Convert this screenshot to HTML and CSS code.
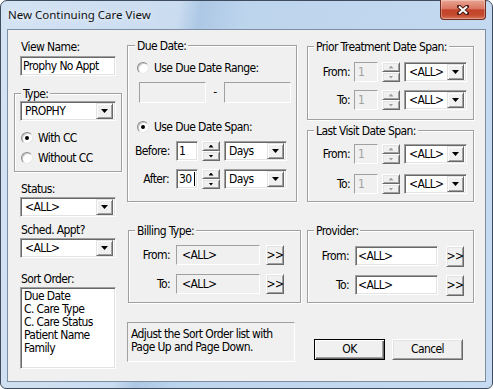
FILE: index.html
```html
<!DOCTYPE html>
<html lang="en">
<head>
  <meta charset="UTF-8" />
  <title>New Continuing Care View</title>
  <link rel="stylesheet" href="styles.css">
</head>
<body>
  <div class="window">
    <header class="titlebar">
      <span class="title">New Continuing Care View</span>
      <div class="close">
        <svg width="12" height="10" viewBox="0 0 12 10">
          <path d="M2 1.5 L10 8.5 M10 1.5 L2 8.5" stroke="#4a1d16" stroke-width="4" stroke-linecap="square"/>
          <path d="M2 1.5 L10 8.5 M10 1.5 L2 8.5" stroke="#fff" stroke-width="2"/>
        </svg>
      </div>
    </header>

    <main class="client">
      <!-- coluna esquerda -->
      <section class="col col-left">
        <div class="lbl lbl-view">View Name:</div>
        <div class="edit w96 mt2">Prophy No Appt</div>

        <fieldset class="group group-type">
          <legend>Type:</legend>
          <div class="combo w96"><span class="val">PROPHY</span><span class="drop"></span></div>
          <div class="radio on first"><span class="dot"></span>With CC</div>
          <div class="radio"><span class="dot"></span>Without CC</div>
        </fieldset>

        <div class="lbl lbl-status">Status:</div>
        <div class="combo w96 mt1"><span class="val">&lt;ALL&gt;</span><span class="drop"></span></div>

        <div class="lbl lbl-sched">Sched. Appt?</div>
        <div class="combo w96 mt1"><span class="val">&lt;ALL&gt;</span><span class="drop"></span></div>

        <div class="lbl lbl-sort">Sort Order:</div>
        <div class="list w96 mt1">
          <div>Due Date</div>
          <div>C. Care Type</div>
          <div>C. Care Status</div>
          <div>Patient Name</div>
          <div>Family</div>
        </div>
      </section>

      <!-- coluna do meio -->
      <section class="col col-mid">
        <fieldset class="group group-due">
          <legend>Due Date:</legend>
          <div class="radio"><span class="dot"></span>Use Due Date Range:</div>
          <div class="range">
            <div class="flat box67"></div>
            <span class="dash">-</span>
            <div class="flat box67"></div>
          </div>
          <div class="radio on span-radio"><span class="dot"></span>Use Due Date Span:</div>
          <div class="row row-before">
            <span class="cap cap-due">Before:</span>
            <div class="edit num22">1</div>
            <div class="spin"><span class="up"></span><span class="down"></span></div>
            <div class="combo days"><span class="val">Days</span><span class="drop"></span></div>
          </div>
          <div class="row row-after">
            <span class="cap cap-due">After:</span>
            <div class="edit num22">30<span class="caret"></span></div>
            <div class="spin"><span class="up"></span><span class="down"></span></div>
            <div class="combo days"><span class="val">Days</span><span class="drop"></span></div>
          </div>
        </fieldset>

        <fieldset class="group group-billing">
          <legend>Billing Type:</legend>
          <div class="row">
            <span class="cap cap-billing">From:</span>
            <div class="flat field84">&lt;ALL&gt;</div>
            <div class="btn more">&gt;&gt;</div>
          </div>
          <div class="row row-second">
            <span class="cap cap-billing">To:</span>
            <div class="flat field84">&lt;ALL&gt;</div>
            <div class="btn more">&gt;&gt;</div>
          </div>
        </fieldset>

        <div class="note">Adjust the Sort Order list with<br>Page Up and Page Down.</div>
      </section>

      <!-- coluna direita -->
      <section class="col col-right">
        <fieldset class="group group-prior">
          <legend>Prior Treatment Date Span:</legend>
          <div class="row">
            <span class="cap cap-right">From:</span>
            <div class="flat num24 off">1</div>
            <div class="spin off"><span class="up"></span><span class="down"></span></div>
            <div class="combo days"><span class="val">&lt;ALL&gt;</span><span class="drop"></span></div>
          </div>
          <div class="row row-to-prior">
            <span class="cap cap-right">To:</span>
            <div class="flat num24 off">1</div>
            <div class="spin off"><span class="up"></span><span class="down"></span></div>
            <div class="combo days"><span class="val">&lt;ALL&gt;</span><span class="drop"></span></div>
          </div>
        </fieldset>

        <fieldset class="group group-last">
          <legend>Last Visit Date Span:</legend>
          <div class="row">
            <span class="cap cap-right">From:</span>
            <div class="flat num24 off">1</div>
            <div class="spin off"><span class="up"></span><span class="down"></span></div>
            <div class="combo days"><span class="val">&lt;ALL&gt;</span><span class="drop"></span></div>
          </div>
          <div class="row row-to-last">
            <span class="cap cap-right">To:</span>
            <div class="flat num24 off">1</div>
            <div class="spin off"><span class="up"></span><span class="down"></span></div>
            <div class="combo days"><span class="val">&lt;ALL&gt;</span><span class="drop"></span></div>
          </div>
        </fieldset>

        <fieldset class="group group-provider">
          <legend>Provider:</legend>
          <div class="row">
            <span class="cap cap-provider">From:</span>
            <div class="edit field83">&lt;ALL&gt;</div>
            <div class="btn more more-prov">&gt;&gt;</div>
          </div>
          <div class="row row-second-prov">
            <span class="cap cap-provider">To:</span>
            <div class="edit field83">&lt;ALL&gt;</div>
            <div class="btn more more-prov">&gt;&gt;</div>
          </div>
        </fieldset>

        <div class="actions">
          <div class="btn push default">OK</div>
          <div class="btn push">Cancel</div>
        </div>
      </section>
    </main>
  </div>
</body>
</html>
```

FILE: styles.css
```css
* { margin: 0; padding: 0; box-sizing: border-box; }
body {
  font-family: "DejaVu Sans Condensed", "Liberation Sans", sans-serif;
  font-size: 12px;
  line-height: 13px;
  letter-spacing: -0.6px;
  color: #000;
  background: #fff;
}

/* moldura aero */
.window {
  width: 493px;
  height: 389px;
  display: flex;
  flex-direction: column;
  padding: 0 6px 6px;
  border: 1px solid #3e4c5e;
  border-radius: 7px 7px 6px 6px;
  background: linear-gradient(100deg, #d4e3f4 0%, #cadcf0 32%, #adc8e5 36%, #bdd4ed 44%, #c6dbf1 100%);
}
.titlebar {
  height: 28px;
  flex: none;
  display: flex;
  justify-content: space-between;
  align-items: flex-start;
}
.title {
  margin: 7px 0 0 1px;
  font-family: "Noto Sans", "Liberation Sans", sans-serif;
  font-size: 11.5px;
  line-height: 14px;
  letter-spacing: 0;
  color: #111;
  text-shadow: 0 0 6px #fff;
}
.close {
  width: 46px;
  height: 20px;
  margin-top: -1px;
  display: flex;
  align-items: center;
  justify-content: center;
  border: 1px solid #6e2b20;
  border-top: none;
  border-radius: 0 0 4px 4px;
  background: linear-gradient(#e9a593, #d97762 45%, #c4432a 52%, #c44a2f 80%, #d7785d);
  box-shadow: inset 0 0 0 1px rgba(255,255,255,0.3);
}

.client {
  flex: 1;
  display: flex;
  align-items: flex-start;
  padding-left: 6px;
  border: 1px solid #7b8ea4;
  background: #f0f0f0;
}
.col { display: flex; flex-direction: column; align-items: flex-start; }
.col-left { width: 108px; }
.col-mid { width: 174px; margin-left: 5px; }
.col-right { width: 167px; margin-left: 6px; }

.lbl { margin-left: 7px; height: 13px; white-space: nowrap; }
.lbl-view { margin-top: 11px; }
.lbl-status { margin-top: 11px; }
.lbl-sched { margin-top: 7px; }
.lbl-sort { margin-top: 15px; }
.col-left .edit, .col-left .combo, .col-left .list { margin-left: 6px; }
.col-left .group .combo { margin-left: 0; }
.mt1 { margin-top: 1px; }
.mt2 { margin-top: 2px; }
.w96 { width: 96px; }

/* controles classicos */
.edit, .combo, .list {
  height: 20px;
  display: flex;
  align-items: center;
  padding-left: 2px;
  background: #fff;
  border: 1px solid;
  border-color: #a0a0a0 #fff #fff #a0a0a0;
  box-shadow: inset 1px 1px 0 #696969, inset -1px -1px 0 #e3e3e3;
  white-space: nowrap;
}
.flat {
  height: 20px;
  display: flex;
  align-items: center;
  background: #f0f0f0;
  border: 1px solid;
  border-color: #a0a0a0 #fff #fff #a0a0a0;
  white-space: nowrap;
}
.flat.off { color: #a0a0a0; padding-left: 3px; }
.combo { padding: 2px; justify-content: space-between; }
.combo .val { padding-left: 2px; }
.combo .drop {
  width: 17px;
  height: 16px;
  display: flex;
  align-items: center;
  justify-content: center;
  background: #f0f0f0;
  border: 1px solid;
  border-color: #e3e3e3 #696969 #696969 #e3e3e3;
  box-shadow: inset 1px 1px 0 #fff, inset -1px -1px 0 #a0a0a0;
}
.combo .drop::after {
  content: "";
  width: 7px;
  height: 4px;
  background: #000;
  clip-path: polygon(0 0, 100% 0, 50% 100%);
}
.list {
  height: 82px;
  flex-direction: column;
  align-items: flex-start;
  padding: 2px 0 0 3px;
}
.caret {
  display: inline-block;
  width: 1px;
  height: 14px;
  margin-left: 2px;
  background: #000;
}

.btn {
  display: flex;
  align-items: center;
  justify-content: center;
  background: #f0f0f0;
  border: 1px solid;
  border-color: #fff #696969 #696969 #fff;
  box-shadow: inset 1px 1px 0 #e3e3e3, inset -1px -1px 0 #a0a0a0;
}
.more { width: 18px; height: 20px; margin-left: 6px; }
.more-prov { height: 21px; margin-left: 8px; }

.spin {
  width: 18px;
  height: 20px;
  margin-left: 4px;
  display: flex;
  flex-direction: column;
}
.spin span {
  flex: 1;
  display: flex;
  align-items: center;
  justify-content: center;
  background: #f0f0f0;
  border: 1px solid;
  border-color: #fff #696969 #696969 #fff;
  box-shadow: inset 1px 1px 0 #e3e3e3, inset -1px -1px 0 #a0a0a0;
}
.spin span::after {
  content: "";
  width: 5px;
  height: 3px;
  background: #000;
}
.spin .up::after { clip-path: polygon(50% 0, 100% 100%, 0 100%); }
.spin .down::after { clip-path: polygon(0 0, 100% 0, 50% 100%); }
.spin.off span::after { background: #a0a0a0; }

.radio {
  height: 20px;
  display: flex;
  align-items: center;
  white-space: nowrap;
}
.radio .dot {
  width: 12px;
  height: 12px;
  margin: 0 5px 0 1px;
  display: flex;
  align-items: center;
  justify-content: center;
  border-radius: 50%;
  background: #fff;
  border: 1px solid;
  border-color: #8c8c8c #e8e8e8 #e8e8e8 #8c8c8c;
  box-shadow: inset 1px 1px 0 #c8c8c8;
}
.radio.on .dot::after {
  content: "";
  width: 4px;
  height: 4px;
  border-radius: 50%;
  background: #000;
}

/* group boxes */
.group {
  border: 1px solid #a0a0a0;
  box-shadow: 1px 1px 0 #fff, inset 1px 1px 0 #fff;
}
.group legend {
  margin-left: 6px;
  padding: 3px 2px 0;
  line-height: 13px;
  white-space: nowrap;
  background: #f0f0f0;
}
.group-type { width: 108px; margin-top: 9px; padding: 0 0 3px 5px; }
.group-type legend { margin-left: 1px; }
.group-type .first { margin-top: 7px; }

.group-due { width: 170px; margin-top: 7px; padding: 5px 0 12px 7px; }
.group-due legend { margin-left: 0; }
.group-due .radio .dot { margin-left: 2px; }
.range { display: flex; align-items: center; margin: 4px 0 0 4px; }
.box67 { width: 67px; height: 21px; }
.dash { width: 18px; text-align: center; }
.span-radio { margin-top: 14px; }
.row { display: flex; align-items: center; height: 20px; }
.row-before { margin-top: 4px; }
.row-after { margin-top: 8px; }
.cap { text-align: right; flex: none; }
.cap-due { width: 41px; padding-right: 7px; }
.num22 { width: 22px; }
.days { width: 63px; margin-left: 4px; }

.group-billing { width: 173px; margin: 20px 0 0 1px; padding: 7px 0 8px; }
.cap-billing { width: 47px; padding-right: 6px; }
.field84 { width: 84px; padding-left: 5px; }
.row-second { margin-top: 9px; }

.note {
  width: 168px;
  height: 40px;
  margin-top: 19px;
  padding: 5px 0 0 3px;
  white-space: nowrap;
  border: 1px solid;
  border-color: #a0a0a0 #fff #fff #a0a0a0;
}

.group-prior { width: 167px; margin-top: 8px; padding: 8px 0 9px; }
.group-last { width: 167px; margin-top: 2px; padding: 6px 0 7px; }
.cap-right { width: 46px; padding-right: 4px; }
.num24 { width: 24px; }
.row-to-prior { margin-top: 8px; }
.row-to-last { margin-top: 10px; }

.group-provider { width: 167px; margin-top: 20px; padding: 8px 0 7px; }
.cap-provider { width: 47px; padding-right: 6px; }
.field83 { width: 83px; }
.row-second-prov { margin-top: 9px; }

.actions { display: flex; margin: 36px 0 0 7px; }
.push { width: 71px; height: 21px; margin-right: 7px; }
.default {
  border-color: #000;
  box-shadow: inset 1px 1px 0 #fff, inset -1px -1px 0 #696969, inset -2px -2px 0 #a0a0a0;
}
```
